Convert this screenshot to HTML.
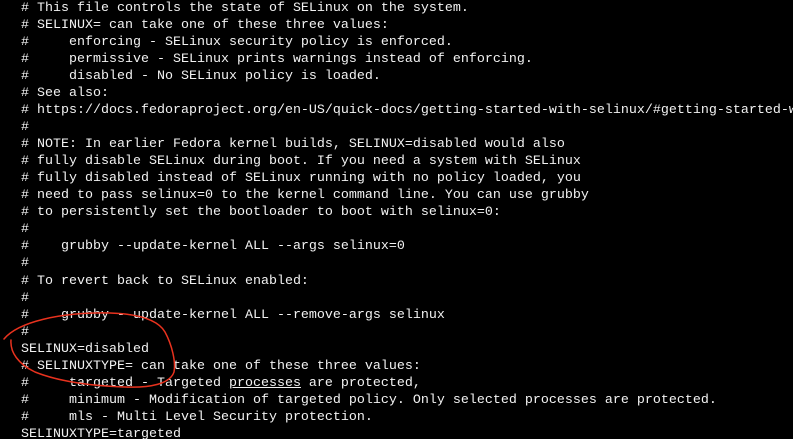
<!DOCTYPE html>
<html><head><meta charset="utf-8"><style>
html,body{margin:0;padding:0;background:#000;width:793px;height:439px;overflow:hidden}
#w{position:absolute;left:0;top:0;width:793px;height:439px;overflow:hidden}
pre{position:absolute;left:21px;top:-0.5px;margin:0;font-family:"Liberation Mono",monospace;font-size:13.33px;line-height:17.06px;color:#f2f2f2;white-space:pre}
svg{position:absolute;left:0;top:0}
</style></head><body><div id="w">
<pre># This file controls the state of SELinux on the system.
# SELINUX= can take one of these three values:
#     enforcing - SELinux security policy is enforced.
#     permissive - SELinux prints warnings instead of enforcing.
#     disabled - No SELinux policy is loaded.
# See also:
# https://docs.fedoraproject.org/en-US/quick-docs/getting-started-with-selinux/#getting-started-w
#
# NOTE: In earlier Fedora kernel builds, SELINUX=disabled would also
# fully disable SELinux during boot. If you need a system with SELinux
# fully disabled instead of SELinux running with no policy loaded, you
# need to pass selinux=0 to the kernel command line. You can use grubby
# to persistently set the bootloader to boot with selinux=0:
#
#    grubby --update-kernel ALL --args selinux=0
#
# To revert back to SELinux enabled:
#
#    grubby --update-kernel ALL --remove-args selinux
#
SELINUX=disabled
# SELINUXTYPE= can take one of these three values:
#     targeted - Targeted <u>processes</u> are protected,
#     minimum - Modification of targeted policy. Only selected processes are protected.
#     mls - Multi Level Security protection.
SELINUXTYPE=targeted</pre>
<svg width="793" height="439"><path d="M4,339 C18,322 60,312 110,313 C140,314 158,320 165,332 C172,345 176,362 174,372 C170,384 150,388 125,387 C95,386 60,382 35,372 C18,364 10,352 11,340" fill="none" stroke="#e8321e" stroke-width="1.5" stroke-linecap="round"/></svg>
</div></body></html>
